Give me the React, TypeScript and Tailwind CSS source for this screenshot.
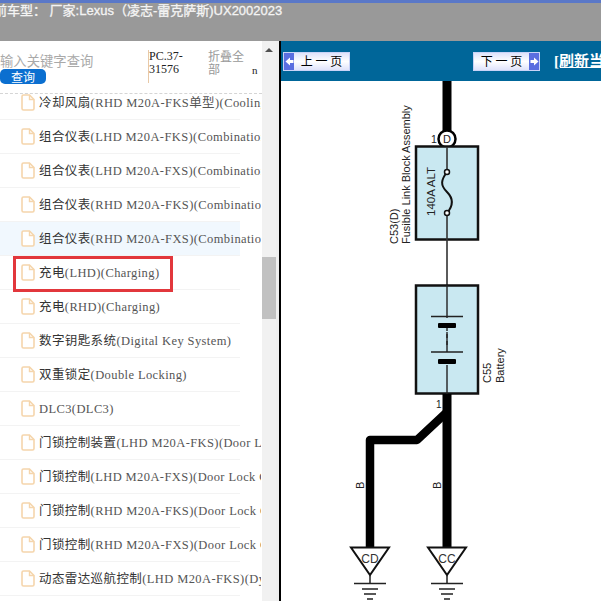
import React from "react";

const cjk = '"Noto Sans CJK SC", sans-serif';

const rows: [string, string][] = [
  ["冷却风扇", "(RHD M20A-FKS单型)(Cooling Fan)"],
  ["组合仪表", "(LHD M20A-FKS)(Combination Meter)"],
  ["组合仪表", "(LHD M20A-FXS)(Combination Meter)"],
  ["组合仪表", "(RHD M20A-FKS)(Combination Meter)"],
  ["组合仪表", "(RHD M20A-FXS)(Combination Meter)"],
  ["充电", "(LHD)(Charging)"],
  ["充电", "(RHD)(Charging)"],
  ["数字钥匙系统", "(Digital Key System)"],
  ["双重锁定", "(Double Locking)"],
  ["", "DLC3(DLC3)"],
  ["门锁控制装置", "(LHD M20A-FKS)(Door Lock Control)"],
  ["门锁控制", "(LHD M20A-FXS)(Door Lock Control)"],
  ["门锁控制", "(RHD M20A-FKS)(Door Lock Control)"],
  ["门锁控制", "(RHD M20A-FXS)(Door Lock Control)"],
  ["动态雷达巡航控制", "(LHD M20A-FKS)(Dynamic Radar)"],
];

function FileIcon() {
  return (
    <svg width="14" height="17" viewBox="0 0 14 17" className="shrink-0">
      <path d="M1 2.5 Q1 1 2.5 1 H8.5 L13 5.5 V14.5 Q13 16 11.5 16 H2.5 Q1 16 1 14.5 Z" fill="#fff" stroke="#f5d5ac" strokeWidth="1.6" />
      <path d="M8.5 1 V5.5 H13" fill="none" stroke="#f5d5ac" strokeWidth="1.4" />
    </svg>
  );
}

function NavButton({ label, right }: { label: string; right?: boolean }) {
  const arrow = (
    <span className="w-[10px] h-full shrink-0 bg-[#5a6ee0] flex items-center justify-center">
      <svg width="9" height="9" viewBox="0 0 9 9">
        <path d={right ? "M0.5 3 H4 V0.5 L8.5 4.5 L4 8.5 V6 H0.5 Z" : "M8.5 3 H5 V0.5 L0.5 4.5 L5 8.5 V6 H8.5 Z"} fill="#fff" />
      </svg>
    </span>
  );
  return (
    <div className="h-[19px] w-[67px] shrink-0 flex items-center border border-[#c9d3f7] bg-gradient-to-b from-[#dfe3fb] via-white to-[#dfe3fb] text-[12px] text-black" style={{ fontFamily: cjk }}>
      {!right && arrow}
      <span className="flex-1 text-center whitespace-nowrap leading-none">{label}</span>
      {right && arrow}
    </div>
  );
}

function Diagram() {
  const f = '"Liberation Sans", sans-serif';
  return (
    <svg width="320" height="520" viewBox="281 81 320 520" className="block">
      <rect x="281" y="81" width="320" height="520" fill="#fff" />
      <line x1="447" y1="81" x2="447" y2="135" stroke="#000" strokeWidth="9" />
      <text x="431" y="143" fontFamily={f} fontSize="10.500" fill="#222">1</text>
      <circle cx="447" cy="139" r="8.500" fill="#fff" stroke="#000" strokeWidth="2.5" />
      <text x="447" y="143" fontFamily={f} fontSize="11" textAnchor="middle" fill="#222">D</text>
      <rect x="416" y="146.500" width="62" height="93" fill="#c9e8f1" stroke="#111" strokeWidth="2.5" />
      <path d="M447 147 V172 M447 213 V285" stroke="#333" strokeWidth="1.6" fill="none" />
      <path d="M447 172 C441 180 440 185 447 192 C454 199 453 206 447 213" stroke="#111" strokeWidth="2" fill="none" />
      <circle cx="447" cy="172" r="2.500" fill="#fff" stroke="#111" strokeWidth="1.5" />
      <circle cx="447" cy="213" r="2.500" fill="#fff" stroke="#111" strokeWidth="1.5" />
      <text transform="translate(435 216) rotate(-90)" fontFamily={f} fontSize="11.500" fill="#222">140A ALT</text>
      <text transform="translate(398 244) rotate(-90)" fontFamily={f} fontSize="11" fill="#222">C53(D)</text>
      <text transform="translate(410 244) rotate(-90)" fontFamily={f} fontSize="11" fill="#222">Fusible Link Block Assembly</text>

      <rect x="416" y="285.500" width="62" height="108" fill="#c9e8f1" stroke="#111" strokeWidth="2.5" />
      <path d="M447 285 V318 M447 332 V352 M447 365 V394" stroke="#222" strokeWidth="1.4" fill="none" />
      <path d="M447 327 V347" stroke="#222" strokeWidth="1.4" strokeDasharray="4 3" fill="none" />
      <path d="M431 316.500 H463 M431 352 H463" stroke="#222" strokeWidth="1.4" fill="none" />
      <rect x="438" y="323" width="18" height="5" rx="1" fill="#000" />
      <rect x="438" y="359" width="18" height="5" rx="1" fill="#000" />
      <text transform="translate(491 383) rotate(-90)" fontFamily={f} fontSize="11" fill="#222">C55</text>
      <text transform="translate(504 383) rotate(-90)" fontFamily={f} fontSize="11" fill="#222">Battery</text>

      <text x="436" y="408" fontFamily={f} fontSize="10" fill="#222">1</text>
      <line x1="447" y1="394" x2="447" y2="548" stroke="#000" strokeWidth="9" />
      <path d="M447 412 L417 440 H370 V548" stroke="#000" strokeWidth="8.500" fill="none" strokeLinejoin="round" />
      <text transform="translate(364 489) rotate(-90)" fontFamily={f} fontSize="11" fill="#222">B</text>
      <text transform="translate(441 489) rotate(-90)" fontFamily={f} fontSize="11" fill="#222">B</text>

      {[370, 447].map((x, i) => (
        <g key={x}>
          <path d={`M${x - 19} 547.500 H${x + 19} L${x} 575 Z`} fill="#fff" stroke="#111" strokeWidth="2" strokeLinejoin="miter" />
          <text x={x} y="563" fontFamily={f} fontSize="12" textAnchor="middle" fill="#333">{i === 0 ? "CD" : "CC"}</text>
          <path d={`M${x} 575 V583 M${x - 16} 583.500 H${x + 16} M${x - 8} 589 H${x + 8} M${x - 6} 594 H${x + 6} M${x - 3} 599 H${x + 3}`} stroke="#222" strokeWidth="1.500" fill="none" />
        </g>
      ))}
    </svg>
  );
}

export default function App() {
  return (
    <div className="w-[601px] h-[601px] overflow-hidden flex flex-col bg-white">
      <div className="h-[41px] shrink-0 bg-[#999999] border-t-[3px] border-[#5a78c8] overflow-hidden">
        <div className="-ml-[6px] whitespace-nowrap text-[13px] leading-[15px] text-[#f4f4f4] [-webkit-text-stroke:0.3px_#f4f4f4]" style={{ fontFamily: `"Liberation Sans", ${cjk}` }}>
          前车型： 厂家:Lexus（凌志-雷克萨斯)UX2002023
        </div>
      </div>

      <div className="flex-1 flex min-h-0">
        <div className="w-[262px] shrink-0 overflow-hidden">
          <div className="relative z-10 h-[53px] border-b border-dashed border-[#d5d5d5] flex items-start">
            <div className="w-[148px] shrink-0 pt-[11px]">
              <div className="text-[13.330px] leading-[17px] text-[#a9a9a9] whitespace-nowrap" style={{ fontFamily: cjk }}>输入关键字查询</div>
              <div className="w-[46px] h-[15px] bg-[#0b6fd0] rounded-[5px] text-white text-[12px] leading-[15px] text-center" style={{ fontFamily: cjk }}>查询</div>
            </div>
            <div className="w-[60px] shrink-0 mt-[9px] h-[33px] border-l border-[#e8c9a8] text-[12px] leading-[13px] text-[#222] pr-[6px]" style={{ fontFamily: '"Liberation Serif", serif' }}>
              PC.37-31576
            </div>
            <div className="w-[44px] shrink-0 mt-[8px] text-[12px] leading-[13px] text-[#999]" style={{ fontFamily: cjk }}>折叠全部</div>
            <div className="mt-[23px] text-[11px] leading-[13px] text-[#222]" style={{ fontFamily: '"Liberation Serif", serif' }}>n</div>
          </div>
          <div className="flex flex-col -mt-[8px]">
            {rows.map(([zh, en], i) => (
              <div key={i} className={`relative h-[34px] w-[240px] flex items-center pl-[21px] gap-[4px] border-b border-[#f3f3f3] ${i === 4 ? "bg-[#f1f8fe]" : ""}`}>
                <FileIcon />
                <div className="w-[222px] shrink-0 whitespace-nowrap overflow-hidden text-[12.500px] tracking-[0.4px] leading-[20px] text-[#555]" style={{ fontFamily: `"Liberation Serif", ${cjk}` }}>
                  <span className="text-[#333]" style={{ fontFamily: cjk }}>{zh}</span>
                  {en}
                </div>
                {i === 5 && <div className="absolute left-[13px] top-0 w-[160px] h-[36px] border-[3px] border-[#e2373c]" />}
              </div>
            ))}
          </div>
        </div>

        <div className="w-[14px] shrink-0 bg-[#f1f1f1] flex flex-col items-center pt-[7px]">
          <div className="w-0 h-0 border-l-[4px] border-r-[4px] border-b-[4px] border-l-transparent border-r-transparent border-b-[#505050]" />
          <div className="w-[14px] h-[62px] bg-[#c1c1c1] mt-[205px]" />
        </div>
        <div className="w-[3px] shrink-0 bg-[#efefef]" />
        <div className="w-[2px] shrink-0 bg-black" />

        <div className="flex-1 min-w-0 flex flex-col">
          <div className="h-[40px] shrink-0 bg-[#006699] flex items-center overflow-hidden pl-[2px]">
            <NavButton label="上 一 页" />
            <div className="w-[123px] shrink-0" />
            <NavButton label="下 一 页" right />
            <span className="ml-[14px] text-[15px] font-bold text-white underline whitespace-nowrap" style={{ fontFamily: `"Liberation Serif", ${cjk}` }}>[刷新当前页面]</span>
          </div>
          <div className="flex-1 min-h-0 overflow-hidden">
            <Diagram />
          </div>
        </div>
      </div>
    </div>
  );
}
